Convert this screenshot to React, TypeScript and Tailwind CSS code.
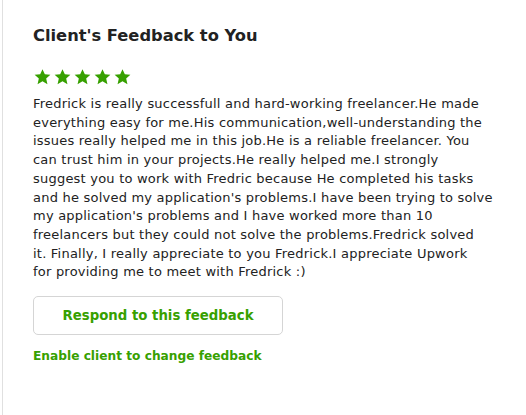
import React from "react";

const feedbackLines = [
  "Fredrick is really successfull and hard-working freelancer.He made",
  "everything easy for me.His communication,well-understanding the",
  "issues really helped me in this job.He is a reliable freelancer. You",
  "can trust him in your projects.He really helped me.I strongly",
  "suggest you to work with Fredric because He completed his tasks",
  "and he solved my application's problems.I have been trying to solve",
  "my application's problems and I have worked more than 10",
  "freelancers but they could not solve the problems.Fredrick solved",
  "it. Finally, I really appreciate to you Fredrick.I appreciate Upwork",
  "for providing me to meet with Fredrick :)",
];

const Star = () => (
  <svg width="19" height="18" viewBox="0 0 24 24" className="shrink-0">
    <path
      d="M12 1.5l3.1 6.9 7.4.7-5.6 5 1.7 7.4L12 17.6l-6.6 3.9 1.7-7.4-5.6-5 7.4-.7z"
      fill="#37a000"
    />
  </svg>
);

const App = () => {
  return (
    <div className="w-[526px] h-[415px] bg-white font-['DejaVu_Sans',sans-serif] pl-[2px]">
      <div className="h-full border-l border-[#e0e0e0] pl-[30px] pt-[25px]">
        <h2 className="text-[16.3px] font-bold text-[#222] leading-[22px]">
          Client&apos;s Feedback to You
        </h2>

        <div className="flex gap-[1px] mt-[21px]">
          {[0, 1, 2, 3, 4].map((i) => (
            <Star key={i} />
          ))}
        </div>

        <p className="mt-[9px] text-[13px] tracking-[0.22px] leading-[18.7px] text-[#222]">
          {feedbackLines.map((line, i) => (
            <span key={i} className="block whitespace-nowrap">
              {line}
            </span>
          ))}
        </p>

        <button className="mt-[14px] w-[250px] h-[39px] rounded-[5px] border border-[#d5d5d5] bg-white text-[13.3px] font-bold text-[#37a000]">
          Respond to this feedback
        </button>

        <div className="mt-[12px] text-[12.2px] font-bold text-[#37a000]">
          Enable client to change feedback
        </div>
      </div>
    </div>
  );
};

export default App;
